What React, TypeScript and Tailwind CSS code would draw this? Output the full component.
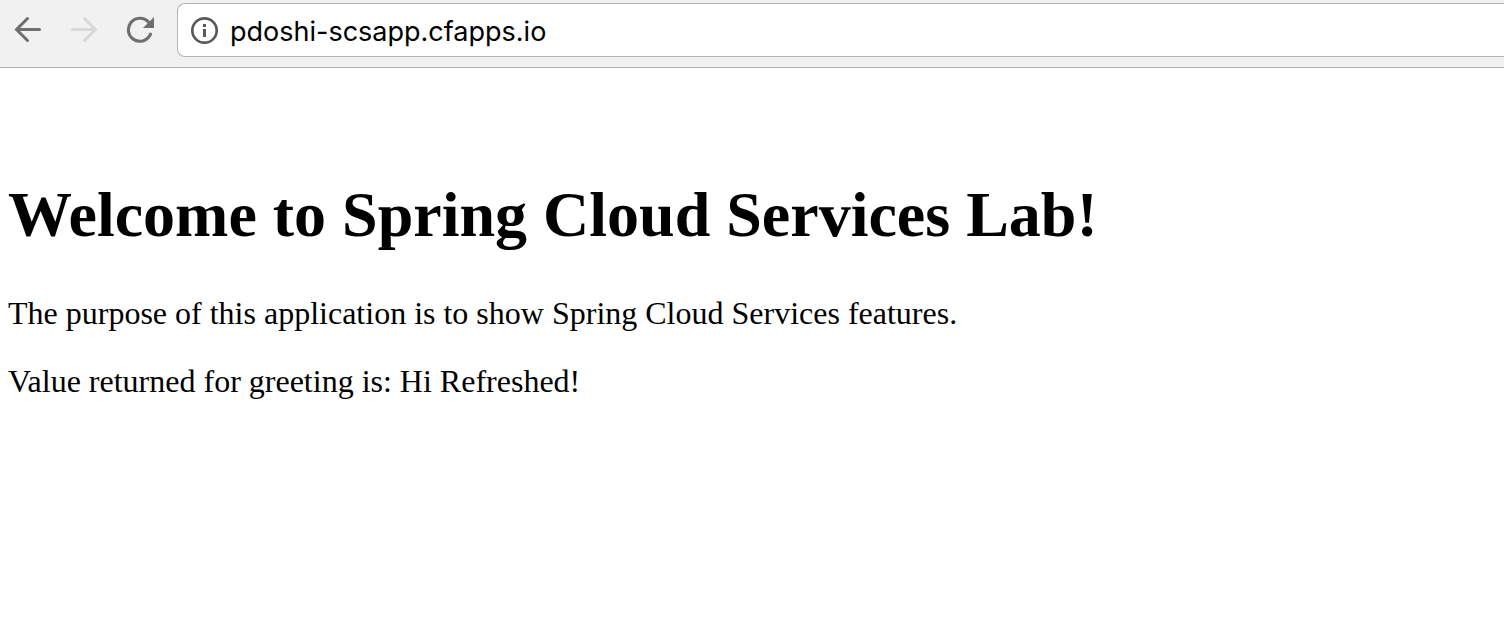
import React from "react";

function BackIcon() {
  return (
    <svg viewBox="0 0 28 28" className="size-7" fill="none" stroke="currentColor" strokeWidth="3" strokeLinecap="round" aria-hidden="true">
      <path d="M25.500 13.500H2.500M13.500 2.500L2.500 13.500l11 11" />
    </svg>
  );
}

function ForwardIcon() {
  return (
    <svg viewBox="0 0 28 28" className="size-7" fill="none" stroke="currentColor" strokeWidth="3" strokeLinecap="round" aria-hidden="true">
      <path d="M2.500 13.500h23M14.500 2.500l11 11-11 11" />
    </svg>
  );
}

function ReloadIcon() {
  return (
    <svg viewBox="0 0 28 28" className="size-7" aria-hidden="true">
      <path d="M24.500 18.200A11.500 11.500 0 1 1 22.300 5.900" fill="none" stroke="currentColor" strokeWidth="3.1" strokeLinecap="round" />
      <path d="M28 1v11H17z" fill="currentColor" />
    </svg>
  );
}

function InfoIcon() {
  return (
    <svg viewBox="0 0 28 28" className="size-7" aria-hidden="true">
      <circle cx="14.500" cy="14.500" r="12.200" fill="none" stroke="currentColor" strokeWidth="2.700" />
      <path d="M13 13h3v8h-3zM13 8h3v3h-3z" fill="currentColor" />
    </svg>
  );
}

export default function App() {
  return (
    <div className="min-h-screen bg-white text-black">
      <header className="flex h-[68px] items-start border-b border-[#b6b4b6] bg-[#f1f1f1] pt-[3px]">
        <nav aria-label="History" className="flex h-[54px] items-center gap-7 pr-[23px] pl-[14px] text-[#6e6e6e]">
          <button type="button" aria-label="Back"><BackIcon /></button>
          <button type="button" aria-label="Forward" disabled className="text-[#d8d8d8]"><ForwardIcon /></button>
          <button type="button" aria-label="Reload"><ReloadIcon /></button>
        </nav>
        <div className="flex h-[54px] flex-1 items-center gap-3 rounded-l-lg border border-r-0 border-[#b4b4b4] bg-white pl-3">
          <button type="button" aria-label="Site information" className="text-[#5a5a5a]"><InfoIcon /></button>
          <input
            type="text"
            aria-label="Address"
            defaultValue="pdoshi-scsapp.cfapps.io"
            className="min-w-0 flex-1 bg-transparent pt-1 font-['Inter',sans-serif] text-[27px] outline-none"
          />
        </div>
      </header>
      <main className="px-2 pt-[110px] font-['Liberation_Serif',serif]">
        <h1 className="text-[64px] leading-[74px] font-bold">Welcome to Spring Cloud Services Lab!</h1>
        <p className="mt-[43px] text-[32px] leading-9">The purpose of this application is to show Spring Cloud Services features.</p>
        <p className="mt-8 text-[32px] leading-9">Value returned for greeting is: Hi Refreshed!</p>
      </main>
    </div>
  );
}
